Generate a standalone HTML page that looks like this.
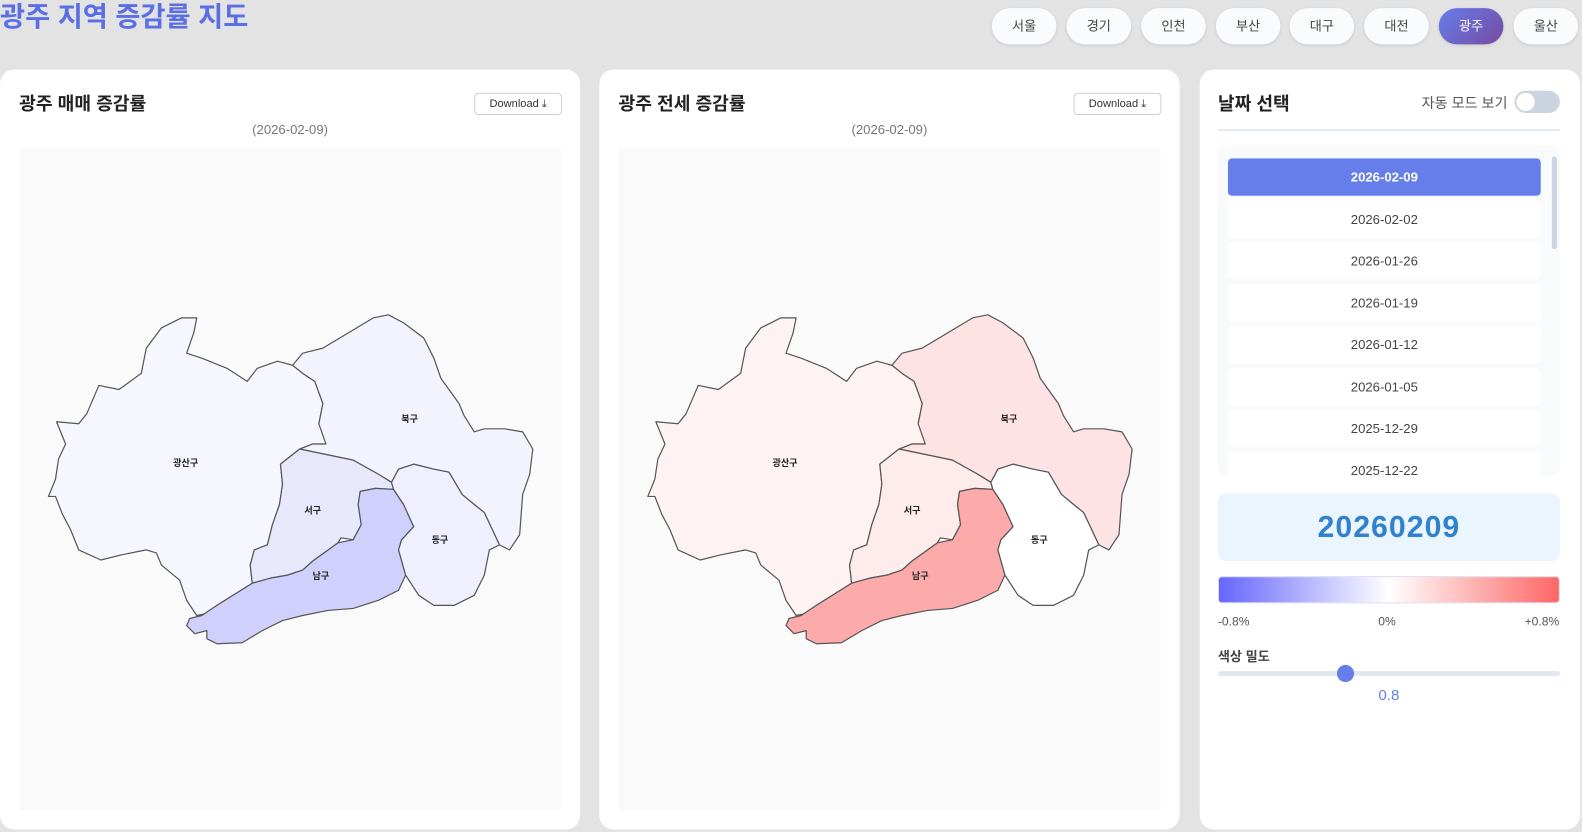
<!DOCTYPE html>
<html><head><meta charset="utf-8"><style>
*{box-sizing:border-box;margin:0;padding:0}
body{width:1582px;height:832px;background:#e3e3e3;font-family:"Liberation Sans","Noto Sans CJK KR",sans-serif;position:relative;overflow:hidden}
#w{position:absolute;left:0;top:0;width:1568px;height:825px;transform:scale(1.009);transform-origin:0 0}
.title{position:absolute;left:0;top:0;font-size:27px;font-weight:bold;color:#5a6fe6;line-height:34px}
.pill{position:absolute;top:8px;width:64px;height:36px;border-radius:18px;background:#fafbfd;box-shadow:0 1px 3px rgba(0,0,0,.12);font-size:13px;color:#444;text-align:center;line-height:36px}
.pill.on{background:linear-gradient(135deg,#667eea,#764ba2);color:#fff}
.card{position:absolute;top:69px;height:753px;background:#fff;border-radius:14px}
.ch{position:absolute;left:19px;top:89px;font-size:18px;font-weight:bold;color:#222}
.dl{position:absolute;top:92px;width:87px;height:22px;border:1px solid #ccd;border-radius:4px;font-size:11px;color:#333;text-align:center;line-height:20px}
.sub{position:absolute;top:121px;width:100%;text-align:center;font-size:13px;color:#777}
.map{position:absolute;left:19px;top:147px;width:537px;height:656px;background:#fafafa}
svg{position:absolute;left:0;top:0}
.item{position:absolute;left:1217px;width:310px;height:37px;background:#fff;border-radius:4px;font-size:13px;color:#444;text-align:center;line-height:37px}
</style></head><body><div id="w">
<div class="title">광주 지역 증감률 지도</div>
<div class="pill" style="left:983px">서울</div>
<div class="pill" style="left:1057px">경기</div>
<div class="pill" style="left:1131px">인천</div>
<div class="pill" style="left:1205px">부산</div>
<div class="pill" style="left:1278px">대구</div>
<div class="pill" style="left:1352px">대전</div>
<div class="pill on" style="left:1426px">광주</div>
<div class="pill" style="left:1500px">울산</div>

<div class="card" style="left:0;width:575px"></div>
<div class="card" style="left:594px;width:575px"></div>
<div class="card" style="left:1189px;width:377px"></div>

<div class="ch" style="top:89px">광주 매매 증감률</div>
<div class="dl" style="left:470px">Download ⤓</div>
<div class="sub" style="left:0;width:575px">(2026-02-09)</div>
<div class="map"></div>
<div class="ch" style="left:613px">광주 전세 증감률</div>
<div class="dl" style="left:1064px">Download ⤓</div>
<div class="sub" style="left:594px;width:575px">(2026-02-09)</div>
<div class="map" style="left:613px"></div>

<svg width="1568" height="825" viewBox="0 0 1568 825">
<defs>
<path id="gs" d="M56,418 L78,420 86,410 98,382 118,386 140,370 145,345 160,325 180,315 195,315 192,330 185,350 200,355 225,365 245,378 255,365 275,358 290,362 300,370 312,378 320,400 316,420 322,430 323,440 310,440 297,445 278,460 280,480 277,500 270,520 265,540 252,545 248,560 250,578 215,600 205,608 195,610 185,595 178,575 160,560 155,548 145,545 120,550 100,555 78,545 70,525 62,510 55,492 48,492 55,475 58,455 65,440 Z"/>
<path id="bg" d="M297,445 L310,440 323,440 316,420 320,400 312,378 300,370 290,362 300,350 320,345 345,330 370,315 385,312 400,320 420,335 430,355 437,375 455,400 460,412 470,428 480,425 500,425 518,428 528,445 525,470 518,490 515,530 505,545 495,540 480,508 470,500 458,490 445,468 430,465 410,460 395,465 388,478 375,470 350,456 Z"/>
<path id="sg" d="M278,460 L297,445 350,456 375,470 388,478 390,485 372,484 357,487 355,500 358,520 350,535 338,533 335,538 310,556 300,565 285,570 268,573 250,578 248,560 252,545 265,540 270,520 277,500 280,480 Z"/>
<path id="ng" d="M357,487 L372,484 390,485 400,500 410,522 398,535 395,545 402,570 395,585 375,595 350,603 325,605 300,610 280,615 260,625 240,637 215,638 205,633 205,625 193,628 185,620 188,613 200,610 215,600 250,578 268,573 285,570 300,565 310,556 335,538 350,535 358,520 355,500 Z"/>
<path id="dg" d="M388,478 L395,465 410,460 430,465 445,468 458,490 470,500 480,508 495,540 485,545 480,570 470,590 450,600 430,600 415,590 402,570 395,545 398,535 410,522 400,500 390,485 Z"/>
</defs>
<g stroke="#555" stroke-width="1.2" stroke-linejoin="round">
<use href="#gs" fill="#f6f6fe"/><use href="#bg" fill="#f3f3fe"/><use href="#sg" fill="#e8e8fd"/><use href="#ng" fill="#d0d0fd"/><use href="#dg" fill="#efeffd"/>
</g>
<g stroke="#555" stroke-width="1.2" stroke-linejoin="round" transform="translate(594,0)">
<use href="#gs" fill="#fdf3f3"/><use href="#bg" fill="#fde3e3"/><use href="#sg" fill="#fdeceb"/><use href="#ng" fill="#fcaaaa"/><use href="#dg" fill="#ffffff"/>
</g>
<g font-family="Liberation Sans,Noto Sans CJK KR,sans-serif" font-size="9" font-weight="bold" fill="#222" text-anchor="middle">
<text x="184" y="462">광산구</text><text x="406" y="418">북구</text><text x="310" y="509">서구</text><text x="436" y="538">동구</text><text x="318" y="574">남구</text>
<text x="778" y="462">광산구</text><text x="1000" y="418">북구</text><text x="904" y="509">서구</text><text x="1030" y="538">동구</text><text x="912" y="574">남구</text>
</g>
</svg>

<div class="ch" style="left:1207px;top:89px">날짜 선택</div>
<div style="position:absolute;left:1409px;top:92px;font-size:14px;color:#555">자동 모드 보기</div>
<div style="position:absolute;left:1501px;top:90px;width:45px;height:22px;border-radius:11px;background:#cbd5e0"><div style="position:absolute;left:2px;top:2px;width:18px;height:18px;border-radius:50%;background:#fff"></div></div>
<div style="position:absolute;left:1207px;top:128px;width:339px;height:2px;background:#e2e8f0"></div>
<div style="position:absolute;left:1207px;top:145px;width:339px;height:327px;background:#f8fafc;border-radius:8px;overflow:hidden"></div>
<div style="position:absolute;left:1538px;top:155px;width:5px;height:92px;background:#cbd5e0;border-radius:3px"></div>
<div class="item" style="top:157px;background:#667eea;color:#fff;font-weight:bold">2026-02-09</div>
<div class="item" style="top:199px">2026-02-02</div>
<div class="item" style="top:240px">2026-01-26</div>
<div class="item" style="top:282px">2026-01-19</div>
<div class="item" style="top:323px">2026-01-12</div>
<div class="item" style="top:365px">2026-01-05</div>
<div class="item" style="top:406px">2025-12-29</div>
<div class="item" style="top:448px;height:24px;line-height:37px;overflow:hidden;border-radius:4px 4px 0 0">2025-12-22</div>
<div style="position:absolute;left:1207px;top:489px;width:339px;height:67px;background:#ebf5ff;border-radius:8px;text-align:center;line-height:67px;font-size:30px;font-weight:bold;color:#3182ce;letter-spacing:1px">20260209</div>
<div style="position:absolute;left:1207px;top:571px;width:339px;height:27px;border-radius:4px;background:linear-gradient(90deg,#6666ff,#ffffff 50%,#ff6666);border:1px solid #dde"></div>
<div style="position:absolute;left:1207px;top:609px;font-size:12px;color:#555">-0.8%</div>
<div style="position:absolute;left:1366px;top:609px;font-size:12px;color:#555">0%</div>
<div style="position:absolute;left:1511px;top:609px;font-size:12px;color:#555">+0.8%</div>
<div style="position:absolute;left:1207px;top:640px;font-size:13px;font-weight:bold;color:#444">색상 밀도</div>
<div style="position:absolute;left:1207px;top:665px;width:339px;height:5px;border-radius:3px;background:#e2e8f0"></div>
<div style="position:absolute;left:1325px;top:659px;width:17px;height:17px;border-radius:50%;background:#667eea"></div>
<div style="position:absolute;left:1207px;top:681px;width:339px;text-align:center;font-size:15px;color:#667eea">0.8</div>
</div></body></html>
